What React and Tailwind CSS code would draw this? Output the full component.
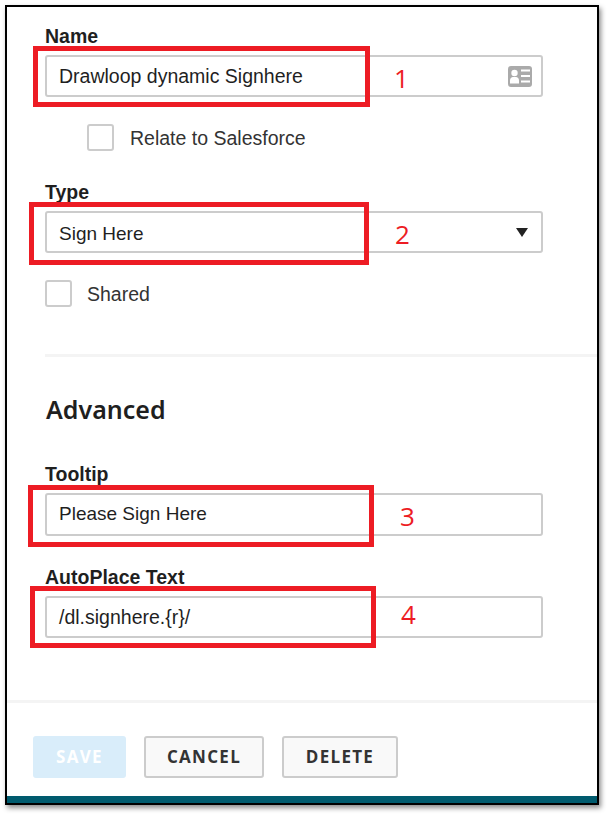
const sans = "font-['Liberation_Sans',Arial,sans-serif]";

function Label({ children, className = '' }) {
  return (
    <div className={`h-6 mb-[7px] flex items-center text-[19.5px] leading-6 font-bold text-[#1f1f1f] ${className}`}>
      {children}
    </div>
  );
}

function Field({ children, right, className = '', textClass = 'top-px text-[19.5px]' }) {
  return (
    <div className={`w-[498px] h-[42px] flex items-center justify-between pl-3 pr-[9px] bg-white border-2 border-[#cccccc] rounded-[3px] text-[#1f1f1f] ${className}`}>
      <span className={`relative ${textClass}`}>{children}</span>
      {right}
    </div>
  );
}

function Checkbox({ label, gap, className = '' }) {
  return (
    <div className={`flex items-center h-[27px] text-[19.5px] text-[#333333] ${className}`}>
      <div className={`w-[27px] h-[27px] bg-white border-2 border-[#cccccc] rounded-[3px] ${gap}`} />
      <span className="relative top-px">{label}</span>
    </div>
  );
}

function ContactIcon() {
  return (
    <svg width="24" height="21" viewBox="0 0 24 21">
      <rect width="24" height="21" rx="3" fill="#aaaaaa" />
      <circle cx="6.5" cy="7" r="3.2" fill="#fff" />
      <path d="M2 17.5v-3c0-2 1.4-3.4 3-3.4h3c1.6 0 3 1.4 3 3.4v3z" fill="#fff" />
      <path d="M13 4.5h9M13 10h9M13 15.5h9" stroke="#fff" strokeWidth="1.8" />
    </svg>
  );
}

function Caret() {
  return (
    <svg width="12" height="9" viewBox="0 0 12 9" className="mr-1">
      <path d="M0 0h12L6 9z" fill="#222222" />
    </svg>
  );
}

// red annotation boxes and numbers drawn over the form
const marks = [
  { box: 'left-[33px] top-[46px] w-[337px] h-[61px]', num: 'left-[394px] top-[61px]', n: '1' },
  { box: 'left-[29px] top-[202px] w-[340px] h-[63px]', num: 'left-[395px] top-[217px]', n: '2' },
  { box: 'left-[28px] top-[485px] w-[346px] h-[62px]', num: 'left-[400px] top-[499px]', n: '3' },
  { box: 'left-[30px] top-[586px] w-[346px] h-[62px]', num: 'left-[401px] top-[597px]', n: '4' },
];

export default function App() {
  return (
    <div className={`relative w-[607px] h-[814px] bg-white overflow-hidden pl-[5px] pt-[5px] ${sans}`}>
      <div className="w-[594px] h-[800px] flex flex-col border-2 border-black bg-white shadow-[2px_3px_5px_rgba(0,0,0,0.45)]">
        <div className="flex-1 flex flex-col pl-[38px] pt-[17px]">
          <Label>Name</Label>
          <Field right={<ContactIcon />}>Drawloop dynamic Signhere</Field>
          <Checkbox label="Relate to Salesforce" gap="mr-4" className="mt-[27px] ml-[42px]" />

          <Label className="mt-[29px]">Type</Label>
          <Field right={<Caret />} textClass="top-[2px] text-[19px]">Sign Here</Field>
          <Checkbox label="Shared" gap="mr-[15px]" className="mt-[27px]" />

          <div className="mt-[47px] h-[3px] bg-[#f4f4f4]" />

          <h2 className="mt-9 h-[34px] flex items-center pl-px text-[25px] font-semibold text-[#1f1f1f] font-['Noto_Sans',sans-serif]">
            Advanced
          </h2>

          <Label className="mt-[35px]">Tooltip</Label>
          <Field className="h-[43px]" textClass="top-0 text-[19px]">Please Sign Here</Field>

          <Label className="mt-[29px]">AutoPlace Text</Label>
          <Field className="h-[41px]">/dl.signhere.{'{r}'}/</Field>
        </div>

        <div className="h-[96px] border-t-[3px] border-[#f4f4f4] pl-[26px] pt-[33px] flex items-start font-['Open_Sans',sans-serif] text-[17px] font-bold tracking-[1.3px]">
          <button className="w-[93px] h-[42px] rounded-[3px] bg-[#d9edfa] text-white">SAVE</button>
          <button className="w-[120px] h-[42px] ml-[18px] rounded-[3px] border-2 border-[#cccccc] bg-[#f9f9f9] text-[#333333]">CANCEL</button>
          <button className="w-[116px] h-[42px] ml-[18px] rounded-[3px] border-2 border-[#cccccc] bg-[#f9f9f9] text-[#333333]">DELETE</button>
        </div>

        <div className="h-[7px] bg-[#005b6e]" />
      </div>

      {marks.map((m) => (
        <div key={m.n}>
          <div className={`absolute border-[5px] border-[#ed1c24] ${m.box}`} />
          <span className={`absolute text-[26px] leading-[34px] text-[#ed1c24] font-['Open_Sans',sans-serif] ${m.num}`}>{m.n}</span>
        </div>
      ))}
    </div>
  );
}
